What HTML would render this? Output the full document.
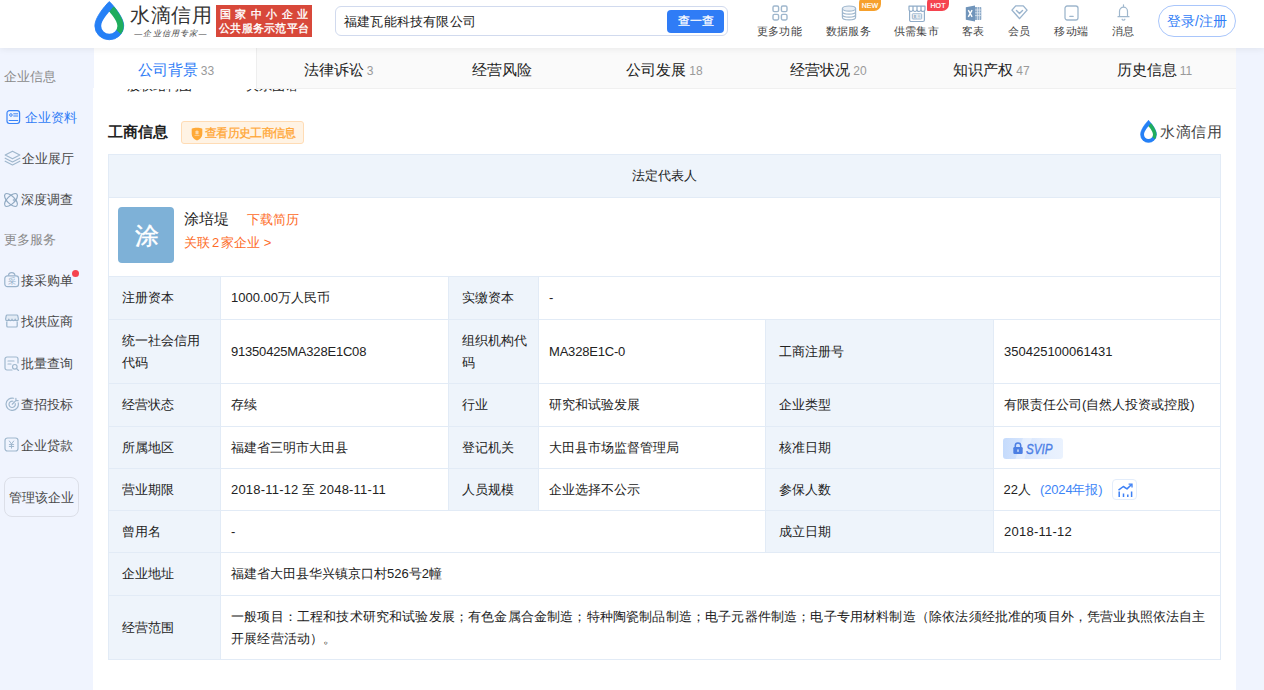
<!DOCTYPE html>
<html lang="zh">
<head>
<meta charset="utf-8">
<title>水滴信用</title>
<style>
*{box-sizing:border-box;margin:0;padding:0}
html,body{width:1264px;height:690px;overflow:hidden}
body{font-family:"Liberation Sans",sans-serif;background:#f0f4fe;color:#333;font-size:13px;position:relative}
.abs{position:absolute}
/* header */
#hd{position:absolute;left:0;top:0;width:1264px;height:48px;background:#fff;box-shadow:0 1px 7px rgba(0,0,0,.07);z-index:5}
#logo-drop{position:absolute;left:94.200px;top:1.200px;width:30.600px;height:39.600px}
#logo-t{position:absolute;left:130px;top:1px;font-size:20px;line-height:28px;color:#333;letter-spacing:.5px;white-space:nowrap}
#logo-s{position:absolute;left:130px;top:27.500px;width:82px;font-size:8px;line-height:12px;color:#444;font-style:italic;white-space:nowrap;letter-spacing:1.200px;text-align:center}
#badge{position:absolute;left:216px;top:5px;width:96px;height:32px;background:#d8483a;color:#fff;font-size:11px;line-height:14px;padding:2px 0 0 0;text-align:center;white-space:nowrap;font-weight:normal;-webkit-text-stroke:.35px #fff}
#badge .l1{letter-spacing:4.4px;padding-left:4px;display:block}
#badge .l2{display:block;letter-spacing:.25px}
#search{position:absolute;left:335px;top:6px;width:393px;height:30px;border:1px solid #d1daee;border-radius:6px;background:#fff}
#search .q{position:absolute;left:8px;top:0;line-height:30px;font-size:13px;color:#222;letter-spacing:.2px}
#search .btn{position:absolute;left:331px;top:3px;width:57px;height:23px;background:#2f7cf6;color:#fff;font-size:12px;line-height:23px;text-align:center;border-radius:4px;-webkit-text-stroke:.25px #fff}
.nav{position:absolute;top:0;height:48px;text-align:center;font-size:11px;color:#444;white-space:nowrap}
.nav .lb{position:absolute;top:23.500px;left:50%;transform:translateX(-50%);line-height:15px;letter-spacing:.45px;padding-left:.9px}
.nav svg{position:absolute;display:block}
.tag{position:absolute;top:-4px;height:15px;width:22px;color:#fff;font-size:7px;line-height:20px;text-align:center;border-radius:7px 1px 7px 1px;font-weight:normal;letter-spacing:.1px;-webkit-text-stroke:.2px #fff}
#login{position:absolute;left:1158px;top:5px;width:78px;height:32px;border:1px solid #a9c6fb;border-radius:16px;color:#2f7cf6;font-size:14px;line-height:31px;text-align:center;white-space:nowrap}
/* sidebar */
#sb{position:absolute;left:0;top:48px;width:93px;height:642px;background:#f0f4fe}
.si{position:absolute;left:0;width:93px;height:20px;line-height:20px;font-size:13px;color:#484848;white-space:nowrap}
.si.g{color:#8a8a8a;left:3.500px}
.si.a{color:#2f7cf6}
.si svg{position:absolute;top:2px}
.si span{position:absolute;top:0}
#mgr{position:absolute;left:4px;top:477px;width:75px;height:40px;border:1px solid #dcdfe8;border-radius:8px;font-size:13px;line-height:39px;text-align:center;color:#4a4a4a;white-space:nowrap}
/* tabs */
#tabs{position:absolute;left:94px;top:48px;width:1142px;height:41px;background:#fafafa;border-bottom:1px solid #f0f0f0;z-index:3}
#tabs .t{position:absolute;top:0;height:40px;width:163px;padding-left:2px;text-align:center;font-size:15px;line-height:44px;color:#222;white-space:nowrap}
#tabs .t i{font-style:normal;font-size:12px;color:#999;margin-left:3px}
#tabs .t.on{background:#fff;color:#2f7cf6;height:41px;border-right:1px solid #eee}
#main{position:absolute;left:93px;top:88px;width:1143px;height:602px;background:#fff}
#clip{position:absolute;left:0;top:0;width:400px;height:5px;overflow:hidden}
#clip span{position:absolute;top:-9px;font-size:13px;line-height:14px;color:#222;white-space:nowrap}
#ttl{position:absolute;left:15px;top:33px;font-size:15px;font-weight:bold;line-height:22px;color:#222;white-space:nowrap}
#hist{position:absolute;left:88px;top:33px;width:123px;height:23px;background:#fff3e4;border:1px solid #ffdcb5;border-radius:3px;color:#ffa531;font-size:12px;line-height:21px;white-space:nowrap}
#hist span{position:absolute;left:23px;top:1px;letter-spacing:-.7px;-webkit-text-stroke:.25px #ffa531}
#wm{position:absolute;left:1045px;top:31px;width:84px;height:24px}
#wm span{position:absolute;left:22px;top:1px;font-size:15px;line-height:24px;color:#444;white-space:nowrap;letter-spacing:.7px}
/* table */
table{position:absolute;left:15px;top:66px;width:1112px;border-collapse:collapse;table-layout:fixed;font-size:13px;color:#222}
td{border:1px solid #e2ebf6;padding:0 0 0 10px;line-height:22px;vertical-align:middle;white-space:nowrap}
td.k{background:#eef4fb;padding-left:13px}
td.h{background:#eef4fb;text-align:center;padding:0}
.av{position:absolute;left:9px;top:9px;width:56px;height:56px;border-radius:4px;background:#7eb1d7;color:#fff;font-size:24px;line-height:58px;text-align:center;text-indent:1px;-webkit-text-stroke:.4px #fff}
.svip{position:absolute;left:9px;top:11px;width:60px;height:21px;border-radius:3px;background:linear-gradient(90deg,#c5dbfc 0%,#d6e5fd 35%,#e6effe 70%,#eaf2fe 100%);overflow:hidden}
.svip:after{content:"";position:absolute;left:16px;top:-5px;width:9px;height:32px;background:rgba(255,255,255,.35);transform:skewX(-20deg)}
.svip i{position:absolute;left:23px;top:0;line-height:22px;font-size:14px;font-weight:normal;color:#4c80e6;transform:scaleX(.83);transform-origin:0 50%;-webkit-text-stroke:.35px #4c80e6;z-index:1}
.svip svg{z-index:1}
.cht{position:absolute;left:118px;top:10px;width:25px;height:21px;border:1px solid #e3edfb;border-radius:4px;background:#fff}
.or{color:#fd6b27}
.bl{color:#3d85f7}
</style>
</head>
<body>
<div id="hd">
  <svg id="logo-drop" viewBox="0 0 17 23" preserveAspectRatio="none"><defs><clipPath id="c1"><path d="M8.5 .3C8.5 .3 .5 8.500 .500 14.500A8 8 0 0 0 16.500 14.500C16.500 8.500 8.500 .300 8.500 .300Z"/></clipPath></defs><path d="M8.500 .300C8.500 .300 .500 8.500 .500 14.500A8 8 0 0 0 16.500 14.500C16.500 8.500 8.500 .300 8.500 .300Z" fill="#2580f6" stroke="#2580f6" stroke-width=".5" stroke-linejoin="round"/><path clip-path="url(#c1)" d="M8.500 6.300L10.700 3.300L17 2V20L15.100 19.500L12.300 16.700L8.500 14.500Z" fill="#1fad5d"/><path d="M8.500 6.300C8.500 6.300 4 11.200 4 14.500A4.500 4.500 0 0 0 13 14.500C13 11.200 8.500 6.300 8.500 6.300Z" fill="#fff"/></svg>
  <div id="logo-t">水滴信用</div>
  <div id="logo-s">—企业信用专家—</div>
  <div id="badge"><span class="l1">国家中小企业</span><span class="l2">公共服务示范平台</span></div>
  <div id="search"><span class="q">福建瓦能科技有限公司</span><span class="btn">查一查</span></div>

  <div class="nav" style="left:749px;width:60px"><svg style="left:23px;top:5px" width="16" height="16" viewBox="0 0 16 16" fill="none" stroke="#9fb7cd" stroke-width="1.4"><rect x="1" y="1" width="5.6" height="5.6" rx="1.4"/><rect x="9.4" y="1" width="5.6" height="5.6" rx="1.4"/><rect x="1" y="9.4" width="5.6" height="5.6" rx="1.4"/><rect x="9.4" y="9.4" width="5.6" height="5.6" rx="1.4"/></svg><span class="lb">更多功能</span></div>
  <div class="nav" style="left:818px;width:60px"><svg style="left:23px;top:5px" width="16" height="16" viewBox="0 0 16 16" fill="none" stroke="#9fb7cd" stroke-width="1.2"><ellipse cx="8" cy="3.6" rx="6.6" ry="2.6" fill="#e8eef5"/><path d="M1.4 3.6v8.6c0 1.5 3 2.7 6.6 2.7s6.600-1.200 6.600-2.700V3.600"/><path d="M1.400 6.500c0 1.500 3 2.700 6.600 2.700s6.600-1.200 6.600-2.700M1.400 9.400c0 1.500 3 2.700 6.600 2.700s6.600-1.200 6.600-2.700"/></svg><span class="tag" style="left:41px;background:#f6a02c">NEW</span><span class="lb">数据服务</span></div>
  <div class="nav" style="left:886px;width:60px"><svg style="left:21.500px;top:4.500px" width="18" height="18" viewBox="0 0 18 18" fill="none" stroke="#90acc8" stroke-width="1.200"><path d="M1.600 5.500V15a1.500 1.500 0 0 0 1.500 1.500h11.800a1.500 1.500 0 0 0 1.500-1.500V5.500"/><path d="M1 1.200h16v3.300a2 2 0 0 1-4 0a2 2 0 0 1-4 0a2 2 0 0 1-4 0a2 2 0 0 1-4 0ZM5 1.200v3.300M9 1.200v3.300M13 1.200v3.300" stroke-linejoin="round"/><rect x="4.300" y="8.800" width="9.400" height="5.200" rx=".6" stroke-width=".9"/><text x="9" y="13" font-size="3.800" text-anchor="middle" fill="#7f9dbb" stroke="none" font-family="Liberation Sans, sans-serif">集市</text></svg><span class="tag" style="left:41px;background:#f5434f">HOT</span><span class="lb">供需集市</span></div>
  <div class="nav" style="left:953px;width:40px"><svg style="left:12px;top:4.500px" width="17" height="17" viewBox="0 0 17 17"><rect x="8" y="2" width="8.300" height="13" rx=".8" fill="#8aa8c7"/><path d="M8 5h8.300M8 7.800h8.300M8 10.600h8.300M12.400 2v13M14.400 2v13" stroke="#e8eef5" stroke-width=".7"/><path d="M.8 2.200L10 .400v16.200L.800 14.800Z" fill="#7094ba"/><path d="M3.300 5.200l3.800 6.600M7.100 5.200l-3.800 6.600" stroke="#fff" stroke-width="1.400"/></svg><span class="lb">客表</span></div>
  <div class="nav" style="left:999px;width:40px"><svg style="left:11.500px;top:4.300px" width="17" height="16" viewBox="0 0 18 16" fill="none" stroke="#9ab4cd" stroke-width="1.500" stroke-linejoin="round"><path d="M5 1.500h8l4 4.500-8 9-8-9Z"/><path d="M5.800 6.300l3.200 3.200 3.200-3.200" stroke-linecap="round"/></svg><span class="lb">会员</span></div>
  <div class="nav" style="left:1046px;width:50px"><svg style="left:18px;top:5px" width="15" height="16" viewBox="0 0 15 16" fill="none" stroke="#9fb7cd" stroke-width="1.300"><rect x="1" y="1" width="13" height="14" rx="2.200"/><path d="M5.800 11.300h3.400" stroke-linecap="round"/></svg><span class="lb">移动端</span></div>
  <div class="nav" style="left:1103px;width:40px"><svg style="left:13.500px;top:4px" width="13" height="17" viewBox="0 0 13 17" fill="none" stroke="#9fb7cd" stroke-width="1.200" stroke-linecap="round" stroke-linejoin="round"><path d="M6.500 .8v1.200M2.500 12.500V7.200a4 4 0 0 1 8 0v5.300M1 12.700h11M5.100 15.200a1.500 1.500 0 0 0 2.800 0"/></svg><span class="lb">消息</span></div>
  <div id="login">登录/注册</div>
</div>

<div id="sb">
  <div class="si g" style="top:19px">企业信息</div>
  <div class="si a" style="top:60px"><svg style="left:6px" width="15" height="15" viewBox="0 0 15 15" fill="none" stroke="#3a84f8" stroke-width="1.200"><rect x="1" y=".7" width="12.600" height="12.800" rx="2.400"/><circle cx="4.900" cy="5" r="1.300" stroke-width="1"/><path d="M7.700 3.800h4.100M7.700 6h4.100M3.100 10.500h8.700" stroke-linecap="round" stroke-width="1"/></svg><span style="left:25px">企业资料</span></div>
  <div class="si" style="top:101px"><svg style="left:4px;top:.500px" width="17" height="16" viewBox="0 0 17 16" fill="none" stroke="#9fb7cd" stroke-width="1.200" stroke-linejoin="round" stroke-linecap="round"><path d="M8.500 1.200l7.300 3.800-7.300 3.800L1.200 5Z"/><path d="M1.200 8.200l7.300 3.800 7.300-3.800M1.200 11.200l7.300 3.800 7.300-3.800"/></svg><span style="left:22px">企业展厅</span></div>
  <div class="si" style="top:142px"><svg style="left:3px;top:2px" width="16" height="16" viewBox="0 0 16 16" fill="none" stroke="#8fa9c2" stroke-width="1.200"><ellipse cx="8" cy="8" rx="8.300" ry="3.800" transform="rotate(45 8 8)"/><ellipse cx="8" cy="8" rx="8.300" ry="3.800" transform="rotate(-45 8 8)"/><path d="M11 6.200l.5 1.300 1.300.5-1.300.5-.5 1.300-.5-1.300-1.300-.5 1.300-.5Z" fill="#8fa9c2" stroke="none"/></svg><span style="left:21px">深度调查</span></div>
  <div class="si g" style="top:182px">更多服务</div>
  <div class="si" style="top:223px"><svg style="left:3.500px;top:.500px" width="16" height="16" viewBox="0 0 16 16" fill="none" stroke="#9ab3cb" stroke-width="1.200"><rect x=".8" y="3.800" width="13.800" height="10.900" rx="2.600"/><path d="M4.500 3.800c0-4.200 6.400-4.200 6.400 0"/><text x="7.700" y="12.300" font-size="7.500" text-anchor="middle" fill="#8eabc6" stroke="none" font-family="Liberation Sans, sans-serif">采</text></svg><span style="left:21px">接采购单</span><b style="position:absolute;left:72px;top:-1px;width:7px;height:7px;border-radius:50%;background:#f5434f"></b></div>
  <div class="si" style="top:264px"><svg style="left:4.500px;top:2px" width="14" height="14" viewBox="0 0 14 14" fill="none" stroke="#9ab3cb" stroke-width="1.200" stroke-linejoin="round"><path d="M1.800 7.500V12a1 1 0 0 0 1 1h8.400a1 1 0 0 0 1-1V7.500"/><path d="M2.200 1h9.600a1 1 0 0 1 1 .8l.6 3.200a1.600 1.600 0 0 1-3.200 0a1.600 1.600 0 0 1-3.200 0a1.600 1.600 0 0 1-3.200 0a1.600 1.600 0 0 1-3.200 0l.6-3.200a1 1 0 0 1 1-.8Z" fill="#e3ebf5"/></svg><span style="left:21px">找供应商</span></div>
  <div class="si" style="top:306px"><svg style="left:4px" width="16" height="15" viewBox="0 0 16 15" fill="none" stroke="#9fb7cd" stroke-width="1.200" stroke-linecap="round"><path d="M8 14H3a2 2 0 0 1-2-2V3a2 2 0 0 1 2-2h9a2 2 0 0 1 2 2v4"/><path d="M4 5h6M4 8h3"/><circle cx="10.800" cy="10.800" r="2.300"/><path d="M12.600 12.600l1.900 1.900"/></svg><span style="left:21px">批量查询</span></div>
  <div class="si" style="top:347px"><svg style="left:4.500px;top:1.500px" width="14.500" height="14.500" viewBox="0 0 16 16" fill="none" stroke="#9fb7cd" stroke-width="1.300" stroke-linecap="round"><path d="M14.600 6.500A6.800 6.800 0 1 1 9.500 1.400"/><path d="M11.300 7.200A3.500 3.500 0 1 1 8.800 4.700"/><path d="M8 8l4.500-4.500M12 1.500v2.500h2.500"/></svg><span style="left:21px">查招投标</span></div>
  <div class="si" style="top:388px"><svg style="left:4px;top:1px" width="15" height="15" viewBox="0 0 15 15" fill="none" stroke="#9fb7cd" stroke-width="1.200" stroke-linecap="round"><rect x="1" y="1" width="13" height="13" rx="2.500"/><path d="M5.300 4l2.200 3 2.200-3M7.500 7v4.200M5.300 7.600h4.400M5.300 9.500h4.400" stroke-width="1"/></svg><span style="left:21px">企业贷款</span></div>
</div>
<div id="mgr">管理该企业</div>

<div id="tabs">
  <div class="t on" style="left:0;width:163px">公司背景<i>33</i></div>
  <div class="t" style="left:162px">法律诉讼<i>3</i></div>
  <div class="t" style="left:325px">经营风险</div>
  <div class="t" style="left:488px">公司发展<i>18</i></div>
  <div class="t" style="left:652px">经营状况<i>20</i></div>
  <div class="t" style="left:815px">知识产权<i>47</i></div>
  <div class="t" style="left:978px">历史信息<i>11</i></div>
</div>

<div id="main">
  <div id="clip"><span style="left:33.500px">股权结构图</span><span style="left:152.500px">关系图谱</span></div>
  <div id="ttl">工商信息</div>
  <div id="hist"><svg style="position:absolute;left:9px;top:4.500px" width="12" height="14" viewBox="0 0 12 14"><path d="M.7 1.700C3.500.500 8.500.500 11.300 1.700V7c0 3.200-2.400 5.200-5.300 6.600C3.100 12.200.700 10.200.700 7Z" fill="#ffa936"/><path d="M6 3.300l2.200 1.700h-.7v2.300h-3V5h-.7Z" fill="#ffd9a8"/><path d="M3.600 8.200h4.800v.7H3.600Z" fill="#ffd9a8"/></svg><span>查看历史工商信息</span></div>
  <div id="wm"><svg style="position:absolute;left:1.600px;top:1px" width="17" height="23" viewBox="0 0 17 23"><defs><clipPath id="c2"><path d="M8.5 .3C8.5 .3 .5 8.500 .500 14.500A8 8 0 0 0 16.500 14.500C16.500 8.500 8.500 .300 8.500 .300Z"/></clipPath></defs><path d="M8.500 .300C8.500 .300 .500 8.500 .500 14.500A8 8 0 0 0 16.500 14.500C16.500 8.500 8.500 .300 8.500 .300Z" fill="#2580f6" stroke="#2580f6" stroke-width=".5" stroke-linejoin="round"/><path clip-path="url(#c2)" d="M8.500 6.300L10.700 3.300L17 2V20L15.100 19.500L12.300 16.700L8.500 14.500Z" fill="#1fad5d"/><path d="M8.500 6.300C8.500 6.300 4 11.200 4 14.500A4.500 4.500 0 0 0 13 14.500C13 11.200 8.500 6.300 8.500 6.300Z" fill="#fff"/></svg><span>水滴信用</span></div>

  <table>
    <colgroup><col style="width:112px"><col style="width:228px"><col style="width:90px"><col style="width:227px"><col style="width:228px"><col style="width:227px"></colgroup>
    <tr style="height:43px"><td class="h" colspan="6">法定代表人</td></tr>
    <tr style="height:79px"><td colspan="6" style="position:relative;padding:0"><div style="position:relative;height:78px">
      <div class="av">涂</div>
      <span class="abs" style="left:75px;top:10px;font-size:15px;line-height:22px">涂培堤</span>
      <span class="abs or" style="left:138px;top:11px;font-size:13px;line-height:22px">下载简历</span>
      <span class="abs or" style="left:75px;top:34px;font-size:13px;line-height:22px">关联<span style="margin:0 2px">2</span>家企业 &gt;</span>
    </div></td></tr>
    <tr style="height:43px"><td class="k">注册资本</td><td>1000.00万人民币</td><td class="k">实缴资本</td><td colspan="3">-</td></tr>
    <tr style="height:64px"><td class="k">统一社会信用<br>代码</td><td style="letter-spacing:-.2px">91350425MA328E1C08</td><td class="k">组织机构代<br>码</td><td style="letter-spacing:-.2px">MA328E1C-0</td><td class="k">工商注册号</td><td>350425100061431</td></tr>
    <tr style="height:43px"><td class="k">经营状态</td><td>存续</td><td class="k">行业</td><td>研究和试验发展</td><td class="k">企业类型</td><td>有限责任公司(自然人投资或控股)</td></tr>
    <tr style="height:42px"><td class="k">所属地区</td><td>福建省三明市大田县</td><td class="k">登记机关</td><td>大田县市场监督管理局</td><td class="k">核准日期</td><td style="padding:0"><div style="position:relative;height:41px"><div class="svip"><svg style="position:absolute;left:10px;top:4px" width="10" height="12" viewBox="0 0 10 12"><rect x=".3" y="5" width="9.400" height="7" rx="1.200" fill="#4c7fe3"/><path d="M2.300 5.500V3.600a2.700 2.700 0 0 1 5.400 0v1.900" fill="none" stroke="#4c7fe3" stroke-width="1.500"/><rect x="4.300" y="7.300" width="1.400" height="2.600" rx=".6" fill="#dbe8fd"/></svg><i>SVIP</i></div></div></td></tr>
    <tr style="height:42px"><td class="k">营业期限</td><td style="letter-spacing:.2px">2018-11-12 至 2048-11-11</td><td class="k">人员规模</td><td>企业选择不公示</td><td class="k">参保人数</td><td style="padding:0"><div style="position:relative;height:41px"><span class="abs" style="left:9.500px;top:10px;line-height:22px">22人</span><span class="abs bl" style="left:46px;top:10px;line-height:22px;letter-spacing:-.15px">(2024年报)</span><div class="cht"><svg style="position:absolute;left:4px;top:2.700px" width="16" height="15" viewBox="0 0 16 15" fill="none" stroke="#3d80f5" stroke-linecap="butt"><path d="M2.200 14V8.500M6.500 14V10.500M10.800 14V11.500M14.600 14V8.500" stroke-width="1.500"/><path d="M1.500 7.200L6.300 3.500l3.700 2.400 4.600-4.400" stroke-width="1.500" stroke-linejoin="round"/><path d="M11.600 1.200h3.400v3.400" stroke-width="1.300"/></svg></div></div></td></tr>
    <tr style="height:42px"><td class="k">曾用名</td><td colspan="3">-</td><td class="k">成立日期</td><td style="letter-spacing:.25px">2018-11-12</td></tr>
    <tr style="height:43px"><td class="k">企业地址</td><td colspan="5">福建省大田县华兴镇京口村526号2幢</td></tr>
    <tr style="height:64px"><td class="k">经营范围</td><td colspan="5" style="padding-right:0;letter-spacing:.17px;white-space:nowrap">一般项目：工程和技术研究和试验发展；有色金属合金制造；特种陶瓷制品制造；电子元器件制造；电子专用材料制造（除依法须经批准的项目外，凭营业执照依法自主<br>开展经营活动）。</td></tr>
  </table>
</div>
</body>
</html>
